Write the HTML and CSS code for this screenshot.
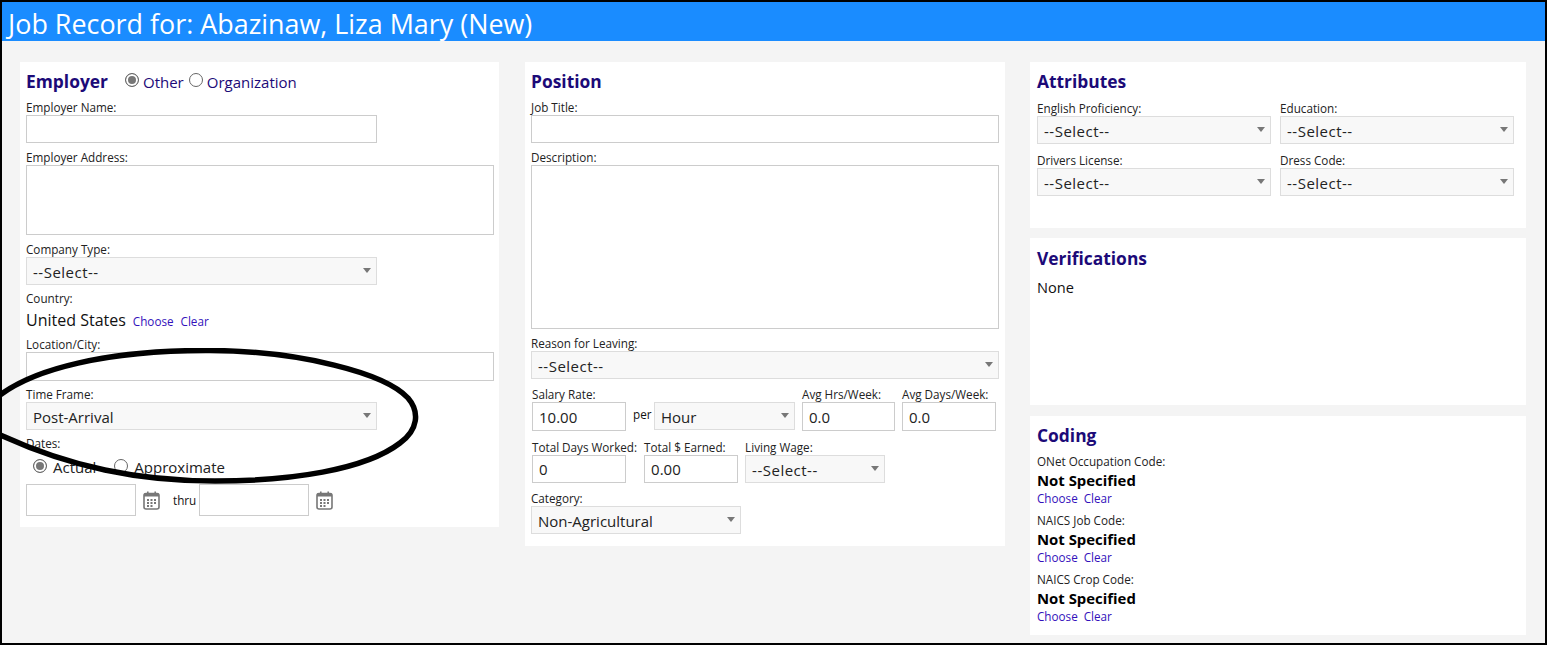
FILE: index.html
```html
<!DOCTYPE html>
<html lang="en">
<head>
    <meta charset="UTF-8">
    <title>Job Record</title>
    <link rel="stylesheet" href="styles.css">
</head>
<body>
    <div class="page">
        <div class="header">Job Record for: Abazinaw, Liza Mary (New)</div>

        <div class="container">
            <div class="col col-employer">
                <div class="panel panel-employer">
                    <div class="employer-head">
                        <h2>Employer</h2>
                        <label class="radio radio-top first"><input type="radio" name="emp" checked>Other</label>
                        <label class="radio radio-top"><input type="radio" name="emp">Organization</label>
                    </div>
                    <div class="field">
                        <label>Employer Name:</label>
                        <input type="text" class="w-351">
                    </div>
                    <div class="field">
                        <label>Employer Address:</label>
                        <textarea class="w-full h-70"></textarea>
                    </div>
                    <div class="field">
                        <label>Company Type:</label>
                        <div class="select w-351"><select class="placeholder"><option>--Select--</option></select></div>
                    </div>
                    <div class="field country">
                        <label>Country:</label>
                        <div class="country-row">
                            <span class="value country-name">United States</span>
                            <a href="#">Choose</a>
                            <a href="#">Clear</a>
                        </div>
                    </div>
                    <div class="field">
                        <label>Location/City:</label>
                        <input type="text" class="w-full tall">
                    </div>
                    <div class="field tight">
                        <label>Time Frame:</label>
                        <div class="select w-351"><select><option>Post-Arrival</option></select></div>
                    </div>
                    <div class="field dates tight">
                        <label>Dates:</label>
                        <div class="radio-row">
                            <label class="radio"><input type="radio" name="dt" checked>Actual</label>
                            <label class="radio"><input type="radio" name="dt">Approximate</label>
                        </div>
                        <div class="date-row">
                            <input type="text" class="date">
                            <svg class="cal" viewBox="0 0 17 19"><use href="#cal"></use></svg>
                            <span class="thru">thru</span>
                            <input type="text" class="date">
                            <svg class="cal" viewBox="0 0 17 19"><use href="#cal"></use></svg>
                        </div>
                    </div>
                </div>
            </div>

            <div class="col col-position">
                <div class="panel panel-position">
                    <h2>Position</h2>
                    <div class="field">
                        <label>Job Title:</label>
                        <input type="text" class="w-full">
                    </div>
                    <div class="field">
                        <label>Description:</label>
                        <textarea class="w-full h-164"></textarea>
                    </div>
                    <div class="field">
                        <label>Reason for Leaving:</label>
                        <div class="select w-full"><select class="placeholder"><option>--Select--</option></select></div>
                    </div>
                    <div class="row row-salary">
                        <div class="field">
                            <label>Salary Rate:</label>
                            <input type="text" class="w-94 tall" value="10.00">
                        </div>
                        <span class="per">per</span>
                        <div class="select w-141"><select><option>Hour</option></select></div>
                        <div class="field avg-hrs">
                            <label>Avg Hrs/Week:</label>
                            <input type="text" class="w-93 tall" value="0.0">
                        </div>
                        <div class="field">
                            <label>Avg Days/Week:</label>
                            <input type="text" class="w-94 tall" value="0.0">
                        </div>
                    </div>
                    <div class="row row-totals">
                        <div class="field">
                            <label>Total Days Worked:</label>
                            <input type="text" class="w-94" value="0">
                        </div>
                        <div class="field">
                            <label>Total $ Earned:</label>
                            <input type="text" class="w-94" value="0.00">
                        </div>
                        <div class="field">
                            <label>Living Wage:</label>
                            <div class="select w-140"><select class="placeholder"><option>--Select--</option></select></div>
                        </div>
                    </div>
                    <div class="field category">
                        <label>Category:</label>
                        <div class="select w-210"><select><option>Non-Agricultural</option></select></div>
                    </div>
                </div>
            </div>

            <div class="col col-side">
                <div class="panel panel-attr">
                    <h2>Attributes</h2>
                    <div class="attr-grid">
                        <div class="field">
                            <label>English Proficiency:</label>
                            <div class="select w-full"><select class="placeholder"><option>--Select--</option></select></div>
                        </div>
                        <div class="field">
                            <label>Education:</label>
                            <div class="select w-full"><select class="placeholder"><option>--Select--</option></select></div>
                        </div>
                        <div class="field">
                            <label>Drivers License:</label>
                            <div class="select w-full"><select class="placeholder"><option>--Select--</option></select></div>
                        </div>
                        <div class="field">
                            <label>Dress Code:</label>
                            <div class="select w-full"><select class="placeholder"><option>--Select--</option></select></div>
                        </div>
                    </div>
                </div>

                <div class="panel panel-verify">
                    <h2>Verifications</h2>
                    <div class="value none">None</div>
                </div>

                <div class="panel panel-coding">
                    <h2>Coding</h2>
                    <div class="code">
                        <label>ONet Occupation Code:</label>
                        <div class="code-value">Not Specified</div>
                        <div class="code-links"><a href="#">Choose</a><a href="#">Clear</a></div>
                    </div>
                    <div class="code">
                        <label>NAICS Job Code:</label>
                        <div class="code-value">Not Specified</div>
                        <div class="code-links"><a href="#">Choose</a><a href="#">Clear</a></div>
                    </div>
                    <div class="code">
                        <label>NAICS Crop Code:</label>
                        <div class="code-value">Not Specified</div>
                        <div class="code-links"><a href="#">Choose</a><a href="#">Clear</a></div>
                    </div>
                </div>
            </div>
        </div>

        <!-- hand drawn circle on top of the time frame field -->
        <svg class="circle" viewBox="0 0 430 150">
            <path d="M-6 52 C30 20 110 2 210 2.5 C300 3 385 25 408 50 C420 64 418 82 400 95 C365 122 290 133 215 133 C140 133 70 120 -6 84"></path>
        </svg>
    </div>

    <svg class="defs" width="0" height="0">
        <symbol id="cal" viewBox="0 0 17 19">
            <rect x="1" y="2.5" width="15" height="15.5" rx="2" fill="#fff" stroke="#777" stroke-width="1.6"></rect>
            <rect x="1" y="2.5" width="15" height="3" fill="#777"></rect>
            <rect x="4" y="0.5" width="1.6" height="3" fill="#777"></rect>
            <rect x="11.4" y="0.5" width="1.6" height="3" fill="#777"></rect>
            <path d="M4 8h2v2H4zM7.5 8h2v2h-2zM11 8h2v2h-2zM4 11h2v2H4zM7.5 11h2v2h-2zM11 11h2v2h-2zM4 14h2v2H4zM7.5 14h2v2h-2z" fill="#777"></path>
        </symbol>
    </svg>
</body>
</html>
```

FILE: styles.css
```css
* {
    box-sizing: border-box;
}

body {
    margin: 0;
    font-family: "Open Sans", "Noto Sans", sans-serif;
    color: #111;
}

.page {
    position: relative;
    width: 1547px;
    height: 645px;
    border: 2px solid #000;
    background-color: #f4f4f4;
    overflow: hidden;
}

.header {
    height: 39px;
    padding-left: 6px;
    background-color: #1a8cff;
    color: white;
    font-size: 26.9px;
    line-height: 43px;
    white-space: nowrap;
}

.container {
    display: flex;
    align-items: flex-start;
    padding: 21px 0 0 18px;
}

.col-employer {
    width: 479px;
    margin-right: 26px;
}

.col-position {
    width: 480px;
    margin-right: 25px;
}

.col-side {
    width: 496px;
}

.panel {
    background: white;
    padding: 8px 5px 0 6px;
}

.panel-employer {
    height: 465px;
}

.panel-position {
    height: 484px;
}

.panel-attr {
    height: 166px;
    margin-bottom: 10px;
    padding-left: 7px;
    padding-right: 12px;
}

.panel-verify {
    height: 167px;
    margin-bottom: 11px;
    padding-top: 9px;
    padding-left: 7px;
}

.panel-coding {
    height: 219px;
    padding-left: 7px;
}

h2 {
    margin: 0;
    height: 23px;
    color: #1c0a78;
    font-size: 17.4px;
    font-weight: 700;
    line-height: 23px;
}

.employer-head {
    display: flex;
    align-items: center;
    height: 23px;
}

.radio-top {
    color: #1c0a78;
}

.radio-top.first {
    margin-left: 17px;
}

.radio-top + .radio-top {
    margin-left: 5px;
}

.radio {
    display: inline-flex;
    align-items: center;
    font-size: 15px;
    line-height: 20px;
}

.radio input {
    appearance: none;
    width: 14px;
    height: 14px;
    margin: 0 4px 3px 0;
    border: 1px solid #666;
    border-radius: 50%;
    background: white;
}

.radio input:checked {
    background: #777;
    box-shadow: inset 0 0 0 2px white;
}

.field label,
.code label {
    display: block;
    height: 14px;
    font-size: 11.7px;
    line-height: 12px;
    color: #222;
    white-space: nowrap;
}

.field {
    margin-top: 8px;
}

.field.tight {
    margin-top: 7px;
}

input[type="text"],
textarea {
    display: block;
    height: 28px;
    padding: 0 6px;
    border: 1px solid #ccc;
    background: white;
    font-family: inherit;
    font-size: 15px;
    color: #222;
    resize: none;
    border-radius: 0;
}

input[type="text"].tall {
    height: 29px;
}

.select {
    position: relative;
    height: 28px;
}

.select select {
    appearance: none;
    display: block;
    width: 100%;
    height: 100%;
    padding: 1px 20px 0 6px;
    border: 1px solid #ddd;
    border-radius: 0;
    background: #f8f8f8;
    font-family: inherit;
    font-size: 15px;
    color: #222;
}

.select select.placeholder {
    letter-spacing: 0.5px;
}

.select::after {
    content: "";
    position: absolute;
    top: 11px;
    right: 6px;
    border-left: 4px solid transparent;
    border-right: 4px solid transparent;
    border-top: 5px solid #777;
}

.w-full { width: 100%; }
.w-351 { width: 351px; }
.w-210 { width: 210px; }
.w-141 { width: 141px; }
.w-140 { width: 140px; }
.w-94 { width: 94px; }
.w-93 { width: 93px; }
.h-70 { height: 70px; }
.h-164 { height: 164px; }

.panel-employer textarea,
.panel-employer input.w-full {
    width: 468px;
}

.panel-position .field > .w-full {
    width: 468px;
}

.country {
    margin-top: 7px;
}

.country-row {
    display: flex;
    align-items: baseline;
    height: 24px;
    line-height: 28px;
}

.value {
    font-size: 14.6px;
}

.country-name {
    font-size: 16px;
}

.country-row a {
    margin-left: 7px;
}

a {
    color: #3311bb;
    font-size: 11.7px;
    text-decoration: none;
}

.dates .radio-row {
    display: flex;
    height: 33px;
    padding: 6px 0 0 7px;
}

.dates .radio {
    display: inline-flex;
    height: 20px;
    font-size: 15px;
    line-height: 20px;
}

.dates .radio input {
    margin-right: 6px;
}

.dates .radio + .radio {
    margin-left: 18px;
}

.date-row {
    display: flex;
    align-items: center;
}

input[type="text"].date {
    width: 110px;
    height: 32px;
}

.cal {
    width: 17px;
    height: 19px;
    margin: 1px 0 0 7px;
}

.thru {
    width: 26px;
    margin-left: 13px;
    font-size: 11.7px;
}

.row {
    display: flex;
    align-items: flex-end;
    padding-left: 1px;
}

.row-salary {
    margin-top: 1px;
}

.per {
    width: 28px;
    height: 29px;
    padding-left: 7px;
    font-size: 11.7px;
    line-height: 25px;
}

.row-salary .select {
    margin-bottom: 1px;
}

.avg-hrs {
    margin-left: 7px;
    margin-right: 7px;
}

.row-totals {
    gap: 7px;
    margin-top: 2px;
}

.category {
    margin-top: 9px;
}

.attr-grid {
    display: grid;
    grid-template-columns: 234px 234px;
    column-gap: 9px;
    row-gap: 10px;
    margin-top: 9px;
}

.attr-grid .field {
    margin-top: 0;
}

.none {
    margin-top: 7px;
    line-height: 20px;
}

.code {
    margin-bottom: 6px;
}

.panel-coding h2 + .code {
    margin-top: 8px;
}

.code-value {
    height: 21px;
    font-size: 14.9px;
    font-weight: 700;
    line-height: 22px;
    color: #000;
}

.code-links {
    height: 18px;
    line-height: 14px;
}

.code-links a + a {
    margin-left: 6px;
}

.circle {
    position: absolute;
    left: -2px;
    top: 346px;
    width: 430px;
    height: 150px;
    overflow: hidden;
    pointer-events: none;
}

.circle path {
    fill: none;
    stroke: #000;
    stroke-width: 5.5;
}

.defs {
    position: absolute;
}
```
